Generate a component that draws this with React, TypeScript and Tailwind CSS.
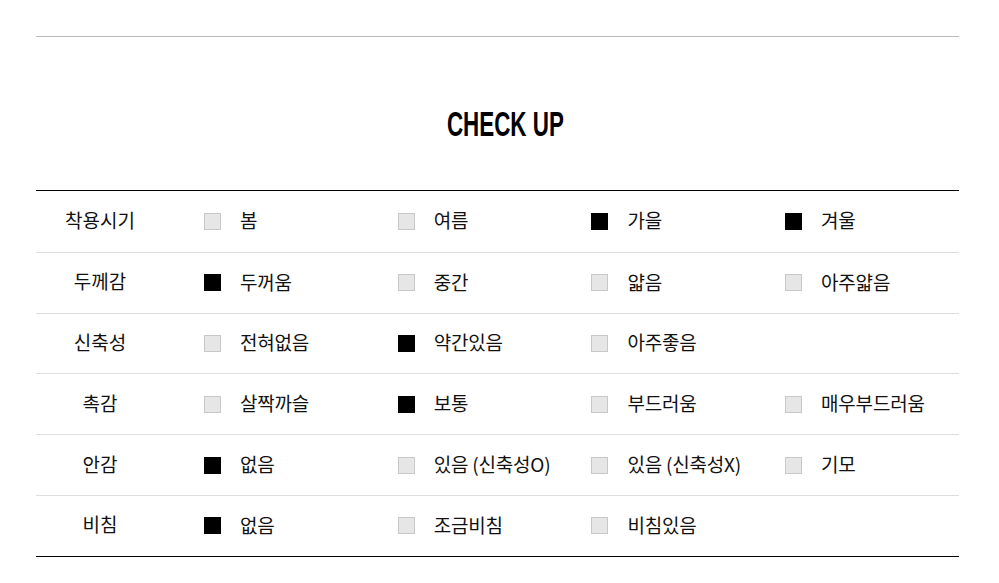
import React from 'react';

type Option = { label: string; checked: boolean };
type Row = { title: string; options: Option[] };

const rows: Row[] = [
  {
    title: '착용시기',
    options: [
      { label: '봄', checked: false },
      { label: '여름', checked: false },
      { label: '가을', checked: true },
      { label: '겨울', checked: true },
    ],
  },
  {
    title: '두께감',
    options: [
      { label: '두꺼움', checked: true },
      { label: '중간', checked: false },
      { label: '얇음', checked: false },
      { label: '아주얇음', checked: false },
    ],
  },
  {
    title: '신축성',
    options: [
      { label: '전혀없음', checked: false },
      { label: '약간있음', checked: true },
      { label: '아주좋음', checked: false },
    ],
  },
  {
    title: '촉감',
    options: [
      { label: '살짝까슬', checked: false },
      { label: '보통', checked: true },
      { label: '부드러움', checked: false },
      { label: '매우부드러움', checked: false },
    ],
  },
  {
    title: '안감',
    options: [
      { label: '없음', checked: true },
      { label: '있음 (신축성O)', checked: false },
      { label: '있음 (신축성X)', checked: false },
      { label: '기모', checked: false },
    ],
  },
  {
    title: '비침',
    options: [
      { label: '없음', checked: true },
      { label: '조금비침', checked: false },
      { label: '비침있음', checked: false },
    ],
  },
];

const App: React.FC = () => {
  return (
    <div className="bg-white w-[999px] h-[583px] pl-9 pr-10 pt-9 font-['Noto_Sans_CJK_KR','Noto_Sans',sans-serif] text-[#111]">
      <div className="border-t border-[#bbbbbb]" />
      <h2 className="h-[153px] flex items-center justify-center pt-[20px] pl-4 text-black">
        <span className="inline-block font-['Liberation_Sans',sans-serif] font-bold text-[35px] leading-none scale-x-[0.64]">
          CHECK UP
        </span>
      </h2>
      <div className="border-t border-b border-black">
        {rows.map((row, idx) => (
          <div
            key={row.title}
            className={`flex items-center h-[60.8px] ${idx > 0 ? 'border-t border-[#dddddd]' : ''}`}
          >
            <div className="w-[128px] shrink-0 text-center text-[19px] leading-none pb-1">{row.title}</div>
            <div className="flex-1 grid grid-cols-[193.7px_193.7px_193.7px_1fr] pl-10">
              {row.options.map((opt) => (
                <div key={opt.label} className="flex items-center gap-[19px]">
                  <span
                    className={`w-[17px] h-[17px] shrink-0 ${
                      opt.checked ? 'bg-black' : 'bg-[#e6e6e6] border border-[#c8c8c8]'
                    }`}
                  />
                  <span className="text-[19px] leading-none tracking-[-0.2px] pb-[3px] whitespace-nowrap">
                    {opt.label}
                  </span>
                </div>
              ))}
            </div>
          </div>
        ))}
      </div>
    </div>
  );
};

export default App;
